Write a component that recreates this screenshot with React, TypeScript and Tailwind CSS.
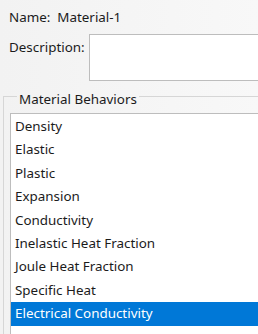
const BEHAVIORS = [
  'Density',
  'Elastic',
  'Plastic',
  'Expansion',
  'Conductivity',
  'Inelastic Heat Fraction',
  'Joule Heat Fraction',
  'Specific Heat',
  'Electrical Conductivity',
]

const SELECTED = 'Electrical Conductivity'

export default function App() {
  return (
    <div className="w-[258px] h-[334px] overflow-hidden bg-gradient-to-r from-[#f2f2f2] to-[#f8f8f8] font-['Noto_Sans',sans-serif] text-[13.4px] text-[#1b1b1b]">
      {/* Name */}
      <div className="h-[34px] flex items-center pl-[9px] whitespace-pre">Name:  Material-1</div>

      {/* Description */}
      <div className="flex h-[47px]">
        <div className="w-[89px] pl-[9px] pt-[3px] leading-[20px] shrink-0">Description:</div>
        <div className="w-[200px] h-[47px] shrink-0 border border-[#bdbdbd] bg-white" />
      </div>

      {/* Material Behaviors group */}
      <fieldset className="mt-[2px] ml-[3px] w-[300px] h-[260px] border-t border-l border-[#d6d6d6] pl-[6px]">
        <legend className="ml-[7px] px-[2px] pt-[6px] leading-[20px]">Material Behaviors</legend>
        <div className="mt-[4px] border border-[#bdbdbd] bg-white pt-[1px] h-[300px]">
          {BEHAVIORS.map((b) => (
            <div
              key={b}
              className={
                b === SELECTED
                  ? 'h-[23.4px] leading-[23.4px] pl-[4px] bg-[#0078d7] text-white'
                  : 'h-[23.4px] leading-[23.4px] pl-[4px]'
              }
            >
              {b}
            </div>
          ))}
        </div>
      </fieldset>
    </div>
  )
}
